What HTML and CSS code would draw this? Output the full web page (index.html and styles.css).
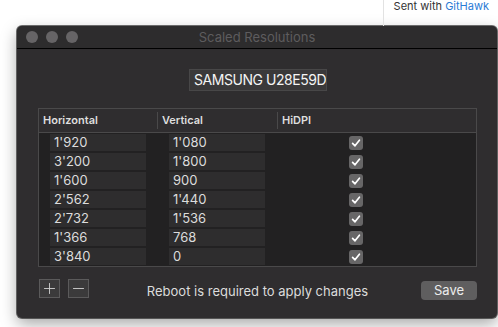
FILE: index.html
```html
<!DOCTYPE html>
<html>
<head>
<meta charset="utf-8">
<link rel="stylesheet" href="styles.css">
</head>
<body>
<div class="top">
  <div class="side">Sent with <span class="link">GitHawk</span></div>
</div>
<div class="window">
  <div class="titlebar">
    <div class="lights"><span></span><span></span><span></span></div>
    <div class="title">Scaled Resolutions</div>
    <div></div>
  </div>
  <div class="content">
    <div class="display-row">
      <div class="display">SAMSUNG U28E59DS</div>
    </div>
    <div class="table">
      <div class="thead">
        <div class="th first">Horizontal</div>
        <div class="th sep">Vertical</div>
        <div class="th sep">HiDPI</div>
      </div>
      <div class="tbody">
        <div class="row"><div class="cell h"><div class="field">1'920</div></div><div class="cell v"><div class="field">1'080</div></div><div class="cell c"><span class="check"><svg viewBox="0 0 14 14" width="14" height="14"><path d="M3.6 7.3 L6 9.8 L10.4 4.2" fill="none" stroke="#fff" stroke-width="1.7" stroke-linecap="round" stroke-linejoin="round"/></svg></span></div></div>
        <div class="row"><div class="cell h"><div class="field">3'200</div></div><div class="cell v"><div class="field">1'800</div></div><div class="cell c"><span class="check"><svg viewBox="0 0 14 14" width="14" height="14"><path d="M3.6 7.3 L6 9.8 L10.4 4.2" fill="none" stroke="#fff" stroke-width="1.7" stroke-linecap="round" stroke-linejoin="round"/></svg></span></div></div>
        <div class="row"><div class="cell h"><div class="field">1'600</div></div><div class="cell v"><div class="field">900</div></div><div class="cell c"><span class="check"><svg viewBox="0 0 14 14" width="14" height="14"><path d="M3.6 7.3 L6 9.8 L10.4 4.2" fill="none" stroke="#fff" stroke-width="1.7" stroke-linecap="round" stroke-linejoin="round"/></svg></span></div></div>
        <div class="row"><div class="cell h"><div class="field">2'562</div></div><div class="cell v"><div class="field">1'440</div></div><div class="cell c"><span class="check"><svg viewBox="0 0 14 14" width="14" height="14"><path d="M3.6 7.3 L6 9.8 L10.4 4.2" fill="none" stroke="#fff" stroke-width="1.7" stroke-linecap="round" stroke-linejoin="round"/></svg></span></div></div>
        <div class="row"><div class="cell h"><div class="field">2'732</div></div><div class="cell v"><div class="field">1'536</div></div><div class="cell c"><span class="check"><svg viewBox="0 0 14 14" width="14" height="14"><path d="M3.6 7.3 L6 9.8 L10.4 4.2" fill="none" stroke="#fff" stroke-width="1.7" stroke-linecap="round" stroke-linejoin="round"/></svg></span></div></div>
        <div class="row"><div class="cell h"><div class="field">1'366</div></div><div class="cell v"><div class="field">768</div></div><div class="cell c"><span class="check"><svg viewBox="0 0 14 14" width="14" height="14"><path d="M3.6 7.3 L6 9.8 L10.4 4.2" fill="none" stroke="#fff" stroke-width="1.7" stroke-linecap="round" stroke-linejoin="round"/></svg></span></div></div>
        <div class="row"><div class="cell h"><div class="field">3'840</div></div><div class="cell v"><div class="field">0</div></div><div class="cell c"><span class="check"><svg viewBox="0 0 14 14" width="14" height="14"><path d="M3.6 7.3 L6 9.8 L10.4 4.2" fill="none" stroke="#fff" stroke-width="1.7" stroke-linecap="round" stroke-linejoin="round"/></svg></span></div></div>
      </div>
    </div>
    <div class="footer">
      <div class="pm">
        <div class="sq"><svg viewBox="0 0 21 19" width="21" height="19"><path d="M4.5 9.5 H16.5 M10.5 3.5 V15.5" stroke="#d0d0d0" stroke-width="1"/></svg></div>
        <div class="sq"><svg viewBox="0 0 21 19" width="21" height="19"><path d="M4.5 9.5 H16.5" stroke="#d0d0d0" stroke-width="1"/></svg></div>
      </div>
      <div class="note">Reboot is required to apply changes</div>
      <div class="save-wrap"><div class="save">Save</div></div>
    </div>
  </div>
</div>
</body>
</html>
```

FILE: styles.css
```css
html, body {
  margin: 0;
  padding: 0;
}
body {
  width: 498px;
  height: 327px;
  overflow: hidden;
  background: #ffffff;
  font-family: Inter, "Noto Sans", sans-serif;
}
.top {
  height: 26px;
  display: flex;
  justify-content: flex-end;
}
.side {
  width: 105px;
  border-left: 1px solid #e2e2e2;
  padding-right: 9px;
  text-align: right;
  font-size: 11px;
  line-height: 13px;
  color: #333;
}
.link {
  color: #2b7bd6;
}
.window {
  margin-left: 17px;
  width: 480px;
  height: 292px;
  background: #2f2d2f;
  border-radius: 5px;
  box-shadow: 0 0 0 1px rgba(0,0,0,0.55), inset 0 1px 0 rgba(255,255,255,0.14), 0 6px 16px rgba(0,0,0,0.35);
  overflow: hidden;
  display: flex;
  flex-direction: column;
}
.titlebar {
  height: 22px;
  border-bottom: 1px solid #000;
  display: grid;
  grid-template-columns: 1fr auto 1fr;
  align-items: center;
  background: #2d2c2d;
}
.lights {
  display: flex;
  gap: 8px;
  padding-left: 9px;
}
.lights span {
  width: 12px;
  height: 12px;
  border-radius: 50%;
  background: #666466;
}
.title {
  font-size: 13px;
  color: #5e5c5e;
  line-height: 22px;
}
.content {
  padding: 20px 20px 0 21px;
  display: flex;
  flex-direction: column;
}
.display-row {
  display: flex;
  justify-content: center;
  padding-left: 1px;
}
.display {
  width: 130px;
  height: 20px;
  padding: 0 2px 0 4px;
  background: #3a393a;
  border: 1px solid #484748;
  color: #f4f4f4;
  font-size: 14px;
  letter-spacing: -0.45px;
  line-height: 20px;
  white-space: nowrap;
  overflow: hidden;
}
.table {
  margin-top: 17px;
  border: 1px solid #4a494a;
  background: #222122;
}
.thead {
  height: 23px;
  display: grid;
  grid-template-columns: 118px 120px 1fr;
  align-items: center;
  background: #2f2d2f;
  border-bottom: 1px solid #4a494a;
}
.th {
  font-size: 11px;
  font-weight: 600;
  color: #dedede;
  line-height: 17px;
}
.th.first {
  padding-left: 4px;
}
.th.sep {
  border-left: 1px solid #4a494a;
  padding-left: 4px;
}
.tbody {
  padding: 1px 0 1px;
  display: flex;
  flex-direction: column;
  gap: 2px;
}
.row {
  height: 17px;
  display: grid;
  grid-template-columns: 118px 120px 1fr;
}
.cell.h {
  padding-left: 11px;
}
.cell.v {
  padding-left: 12px;
}
.cell.c {
  padding-left: 72px;
  display: flex;
  align-items: center;
}
.field {
  width: 92px;
  height: 17px;
  padding-left: 4px;
  background: #2e2d2e;
  color: #dcdcdc;
  font-size: 13px;
  line-height: 17px;
}
.check {
  width: 14px;
  height: 14px;
  border-radius: 3px;
  background: #676667;
  display: flex;
}
.footer {
  margin-top: 12px;
  display: grid;
  grid-template-columns: 1fr auto 1fr;
  align-items: start;
}
.pm {
  display: flex;
  gap: 8px;
  padding-left: 1px;
}
.sq {
  width: 19px;
  height: 17px;
  border: 1px solid #5b5a5b;
  background: #3b3a3b;
  display: flex;
  align-items: center;
  justify-content: center;
  overflow: hidden;
}
.note {
  font-size: 13px;
  color: #dcdcdc;
  line-height: 20px;
  padding-top: 2px;
}
.save-wrap {
  display: flex;
  justify-content: flex-end;
  padding-top: 2px;
}
.save {
  width: 56px;
  height: 19px;
  border-radius: 4px;
  background: #5f5e5f;
  color: #ececec;
  font-size: 13px;
  line-height: 19px;
  text-align: center;
}
```
